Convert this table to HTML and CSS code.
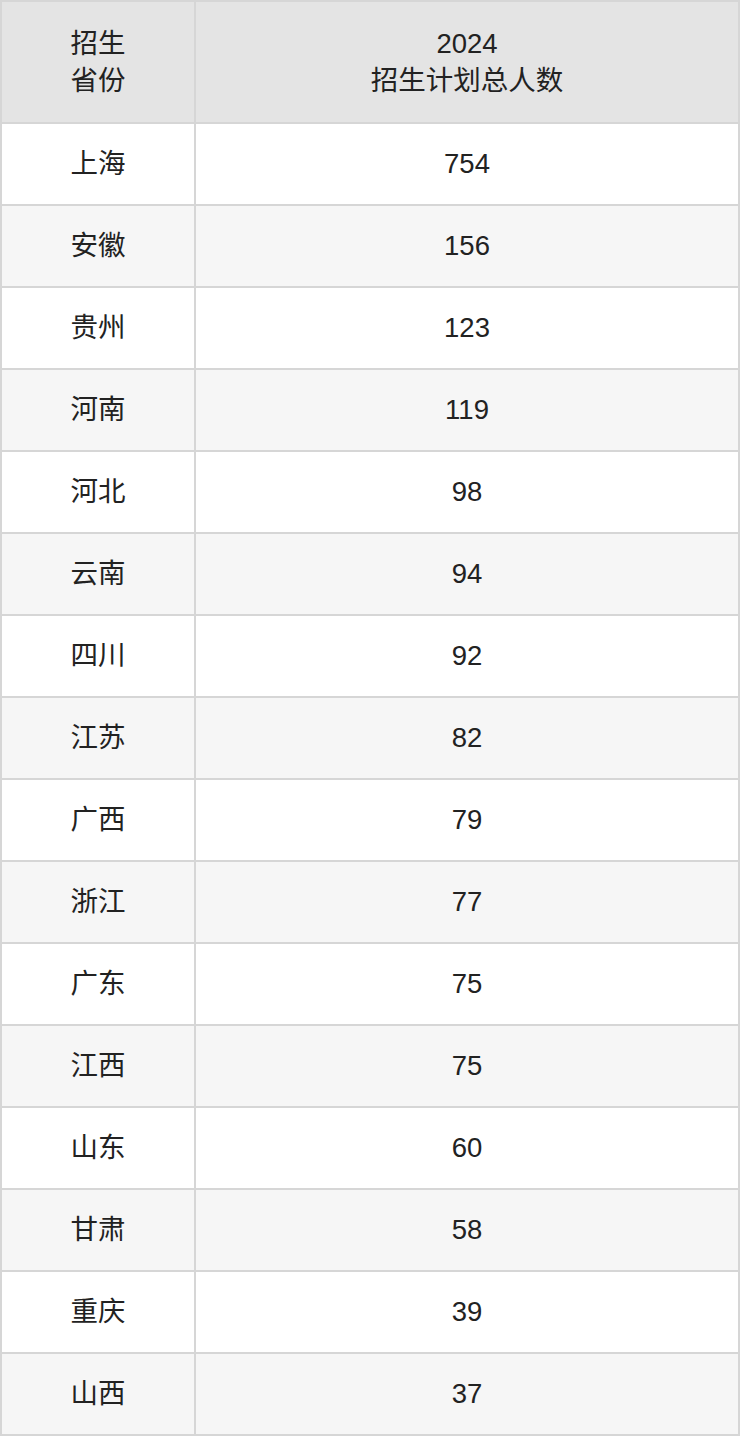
FILE: index.html
```html
<!DOCTYPE html>
<html lang="zh">
<head>
<meta charset="utf-8">
<link rel="stylesheet" href="styles.css">
</head>
<body>
<table class="plan">
<thead>
<tr><th class="c1">招生<br>省份</th><th class="c2">2024<br>招生计划总人数</th></tr>
</thead>
<tbody>
<tr><td>上海</td><td>754</td></tr>
<tr><td>安徽</td><td>156</td></tr>
<tr><td>贵州</td><td>123</td></tr>
<tr><td>河南</td><td>119</td></tr>
<tr><td>河北</td><td>98</td></tr>
<tr><td>云南</td><td>94</td></tr>
<tr><td>四川</td><td>92</td></tr>
<tr><td>江苏</td><td>82</td></tr>
<tr><td>广西</td><td>79</td></tr>
<tr><td>浙江</td><td>77</td></tr>
<tr><td>广东</td><td>75</td></tr>
<tr><td>江西</td><td>75</td></tr>
<tr><td>山东</td><td>60</td></tr>
<tr><td>甘肃</td><td>58</td></tr>
<tr><td>重庆</td><td>39</td></tr>
<tr><td>山西</td><td>37</td></tr>
</tbody>
</table>
</body>
</html>
```
FILE: styles.css
```css
html, body {
  margin: 0;
  padding: 0;
  background: #ffffff;
}
.plan {
  width: 740px;
  border-collapse: collapse;
  table-layout: fixed;
  font-family: "Liberation Sans", "Noto Sans CJK SC", sans-serif;
  font-size: 27.5px;
  color: #222222;
}
.plan th, .plan td {
  border: 2px solid #d6d6d6;
  text-align: center;
  vertical-align: middle;
  padding: 0;
  font-weight: normal;
}
.plan th {
  background: #e4e4e4;
  height: 120px;
  line-height: 37px;
}
.plan .c1 {
  width: 192px;
}
.plan td {
  height: 80px;
  line-height: 32px;
}
.plan tbody tr:nth-child(odd) td {
  background: #ffffff;
}
.plan tbody tr:nth-child(even) td {
  background: #f6f6f6;
}
```
